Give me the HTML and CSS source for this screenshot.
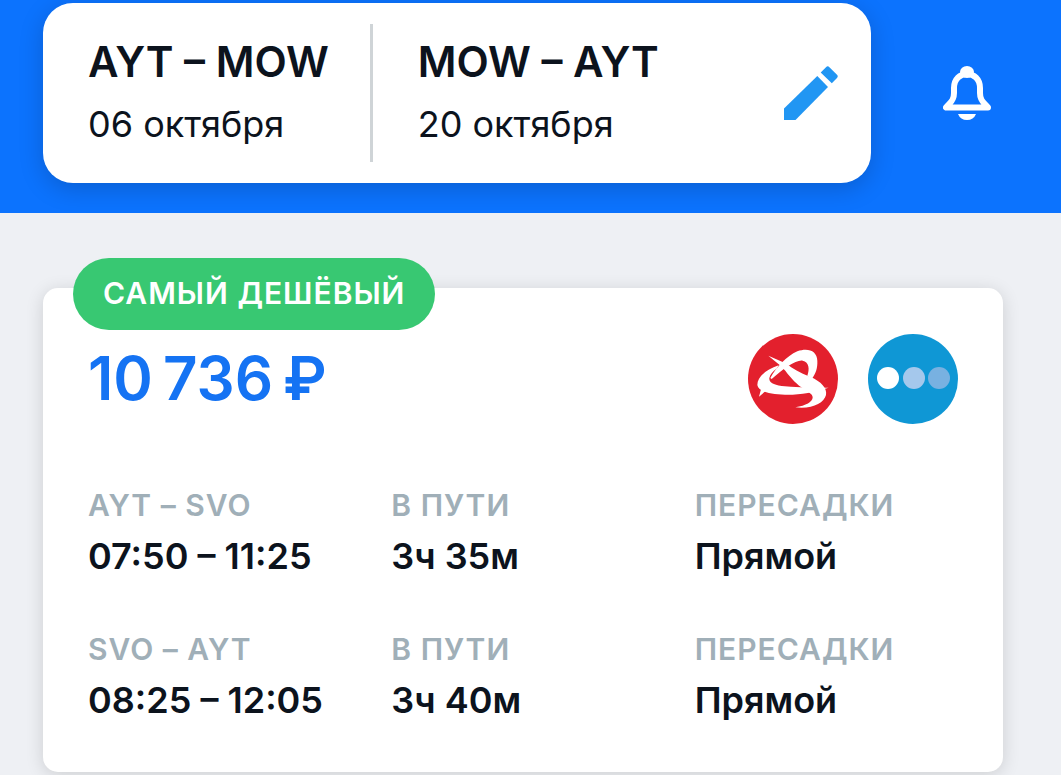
FILE: index.html
```html
<!DOCTYPE html>
<html lang="ru">
<head>
    <meta charset="UTF-8">
    <meta name="viewport" content="width=device-width, initial-scale=1.0">
    <title>Авиабилеты</title>
    <link rel="stylesheet" href="styles.css">
</head>
<body>

    <header class="header">
        <div class="search">
            <div class="trip">
                <p class="route">AYT – MOW</p>
                <p class="date">06 октября</p>
            </div>
            <div class="trip trip-back">
                <p class="route">MOW – AYT</p>
                <p class="date">20 октября</p>
            </div>
            <button class="icon-btn" type="button" aria-label="Изменить">
                <svg width="54" height="54" viewBox="0 0 54 54" fill="#2196f3">
                    <path d="M0 42.5V54h11.5L44 21 33.3 10z"/>
                    <path d="M36.7 6.5L42 1.2q1.7-1.7 3.4 0L53 8.8q1.5 1.5 0 3.2L47.8 17.2z"/>
                </svg>
            </button>
        </div>
        <button class="icon-btn" type="button" aria-label="Уведомления">
            <svg width="48" height="54" viewBox="0 0 48 54">
                <path d="M3 41.5H45C42 37 37 36 37 27V22C37 13 31 8 24 8S11 13 11 22V27C11 36 6 37 3 41.5z" fill="none" stroke="#fff" stroke-width="6" stroke-linejoin="round"/>
                <ellipse cx="24" cy="6" rx="7" ry="6" fill="#fff"/>
                <path d="M15 48H33Q30.5 54 24 54T15 48z" fill="#fff"/>
            </svg>
        </button>
    </header>

    <main class="results">
        <article class="ticket">
            <span class="badge">САМЫЙ ДЕШЁВЫЙ</span>
            <div class="top">
                <p class="price">10&thinsp;736&thinsp;₽</p>
                <div class="airlines">
                    <svg width="90" height="90" viewBox="54 42 270 270" role="img" aria-label="Авиакомпания">
                        <circle cx="189" cy="177" r="135" fill="#e3202d"/>
                        <g fill="#fff">
                            <path d="M121 174C138 143 170 108 202 94C236 82 261 94 262 122C263 145 257 160 246 176L232 167C239 148 238 126 218 122C200 118 160 146 125 177z"/>
                            <path d="M115 107L170 131C186 145 210 158 240 170C274 184 292 205 288 225C282 250 245 268 196 262C228 257 248 246 248 232C248 223 238 218 222 207C200 193 184 176 166 152L148 134z"/>
                            <path d="M146 136C108 148 82 172 82 195C85 215 120 223 165 224C210 225 250 217 296 203C260 204 200 203 155 198C128 194 117 187 118 174C121 162 128 154 140 146z"/>
                            <path d="M87 230L94 204L108 212z"/>
                        </g>
                    </svg>
                    <svg width="90" height="90" viewBox="0 0 90 90" role="img" aria-label="Агентство">
                        <circle cx="45" cy="45" r="45" fill="#0f97d5"/>
                        <circle cx="20" cy="44" r="11" fill="#fff"/>
                        <circle cx="46" cy="44" r="11" fill="#a5c8ec"/>
                        <circle cx="71" cy="44" r="11" fill="#78b1e1"/>
                    </svg>
                </div>
            </div>

            <dl class="flight">
                <div>
                    <dt>AYT – SVO</dt>
                    <dd>07:50 – 11:25</dd>
                </div>
                <div>
                    <dt>В ПУТИ</dt>
                    <dd>3ч 35м</dd>
                </div>
                <div>
                    <dt>ПЕРЕСАДКИ</dt>
                    <dd>Прямой</dd>
                </div>
            </dl>

            <dl class="flight">
                <div>
                    <dt>SVO – AYT</dt>
                    <dd>08:25 – 12:05</dd>
                </div>
                <div>
                    <dt>В ПУТИ</dt>
                    <dd>3ч 40м</dd>
                </div>
                <div>
                    <dt>ПЕРЕСАДКИ</dt>
                    <dd>Прямой</dd>
                </div>
            </dl>
        </article>
    </main>

</body>
</html>
```
FILE: styles.css
```css
* {
    box-sizing: border-box;
    margin: 0;
    padding: 0;
}

body {
    background: #eef0f4;
    color: #0c131d;
    font-family: Inter, "Liberation Sans", sans-serif;
}

.header {
    display: flex;
    align-items: center;
    gap: 72px;
    padding: 3px 70px 30px 43px;
    background: #0c73fe;
}

.search {
    flex: 1;
    display: flex;
    align-items: center;
    padding: 21px 33px 21px 45px;
    background: #fff;
    border-radius: 30px;
    box-shadow: 0 6px 24px rgba(0, 0, 0, 0.18);
}

.trip {
    flex: 1;
    padding: 11px 0 14px;
}

.trip-back {
    flex: 1.3;
    padding-left: 45px;
    border-left: 3px solid #cfd4d7;
}

.route {
    font-size: 42px;
    line-height: 54px;
    font-weight: 600;
}

.date {
    margin-top: 11px;
    font-size: 36px;
    line-height: 48px;
}

.icon-btn {
    border: none;
    background: none;
    cursor: pointer;
}

.icon-btn svg {
    display: block;
}

.results {
    padding: 75px 58px 3px 43px;
}

.ticket {
    position: relative;
    padding: 46px 45px 48px;
    background: #fff;
    border-radius: 15px;
    box-shadow: 0 3px 18px rgba(0, 0, 0, 0.14);
}

.badge {
    position: absolute;
    top: -30px;
    left: 30px;
    padding: 0 30px 2px;
    border-radius: 36px;
    background: #38c872;
    color: #fff;
    font-size: 30px;
    line-height: 70px;
    font-weight: 600;
    letter-spacing: 1px;
}

.top {
    display: flex;
    justify-content: space-between;
    align-items: center;
    margin-bottom: 57px;
}

.price {
    padding-bottom: 3px;
    color: #1573f3;
    font-size: 60px;
    line-height: 72px;
    font-weight: 600;
}

.airlines {
    display: flex;
    gap: 30px;
}

.flight {
    display: grid;
    grid-template-columns: repeat(3, 1fr);
    gap: 40px;
}

.flight + .flight {
    margin-top: 45px;
}

.flight dt {
    color: #a0afb8;
    font-size: 30px;
    line-height: 48px;
    font-weight: 600;
    letter-spacing: 1px;
}

.flight dd {
    margin-top: 3px;
    font-size: 36px;
    line-height: 48px;
    font-weight: 600;
}
```
